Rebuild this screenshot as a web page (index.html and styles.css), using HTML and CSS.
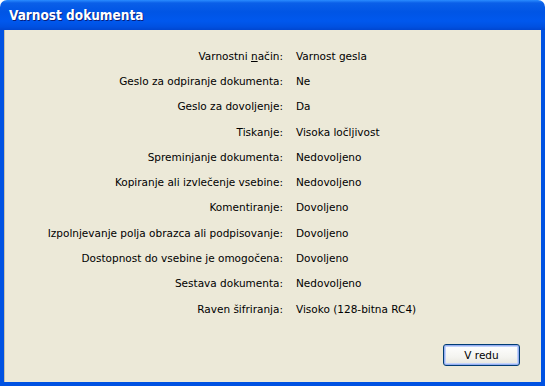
FILE: index.html
```html
<!DOCTYPE html>
<html lang="sl">
<head>
  <meta charset="UTF-8"/>
  <title>Varnost dokumenta</title>
  <link rel="stylesheet" href="styles.css">
</head>
<body>
  <div class="window">
    <div class="titlebar">Varnost dokumenta</div>
    <div class="body">
      <div class="props">
        <span class="lbl">Varnostni <u>n</u>ačin:</span><span class="val">Varnost gesla</span>
        <span class="lbl">Geslo za odpiranje dokumenta:</span><span class="val">Ne</span>
        <span class="lbl">Geslo za dovoljenje:</span><span class="val">Da</span>
        <span class="lbl">Tiskanje:</span><span class="val">Visoka ločljivost</span>
        <span class="lbl">Spreminjanje dokumenta:</span><span class="val">Nedovoljeno</span>
        <span class="lbl">Kopiranje ali izvlečenje vsebine:</span><span class="val">Nedovoljeno</span>
        <span class="lbl">Komentiranje:</span><span class="val">Dovoljeno</span>
        <span class="lbl">Izpolnjevanje polja obrazca ali podpisovanje:</span><span class="val">Dovoljeno</span>
        <span class="lbl">Dostopnost do vsebine je omogočena:</span><span class="val">Dovoljeno</span>
        <span class="lbl">Sestava dokumenta:</span><span class="val">Nedovoljeno</span>
        <span class="lbl">Raven šifriranja:</span><span class="val">Visoko (128-bitna RC4)</span>
      </div>
      <div class="actions">
        <button class="btn">V redu</button>
      </div>
    </div>
  </div>
</body>
</html>
```

FILE: styles.css
```css
/* Reset */
* { margin:0; padding:0; box-sizing:border-box; }
html, body {
  width:100%; height:100%; overflow:hidden;
  background:#fff;
  font-family:Tahoma,'DejaVu Sans',sans-serif;
}

/* Okno XP */
.window {
  width:545px; height:386px;
  display:flex; flex-direction:column;
}
.titlebar {
  height:30px;
  padding:7px 0 0 9px;
  border-radius:7px 7px 0 0;
  background:linear-gradient(180deg,#2a8cff 0%,#0a5fe8 10%,#0055e5 40%,#0058ee 70%,#0050e0 90%,#0046d0 100%);
  color:#fff;
  font-family:'DejaVu Sans Condensed','DejaVu Sans',sans-serif;
  font-weight:bold; font-size:13.5px;
  text-shadow:1px 1px 0 #0a1e7a;
}
.body {
  flex:1;
  display:flex; flex-direction:column;
  background:#ece9d8;
  border:4px solid #0052e2;
  border-top:none;
  box-shadow:inset 1px 0 0 #c4c1b0;
}

/* Lastnosti */
.props {
  display:grid;
  grid-template-columns:279px auto;
  column-gap:13px;
  grid-auto-rows:25.3px;
  align-items:center;
  padding-top:13px;
  font-family:'DejaVu Sans',sans-serif;
  font-size:10.5px;
  color:#000;
}
.lbl { text-align:right; }

/* Gumb */
.actions {
  flex:1;
  display:flex; justify-content:flex-end; align-items:flex-end;
  padding:0 21px 16px 0;
}
.btn {
  width:77px; height:22px;
  border:1px solid #003c74;
  border-radius:3px;
  background:linear-gradient(180deg,#fff 0%,#f4f4f0 60%,#e6e5dc 100%);
  box-shadow:inset 0 0 0 1px #97aef0, inset 0 0 0 2px #c1d3fb;
  font-family:'DejaVu Sans',sans-serif;
  font-size:10.5px;
  color:#000;
}
```
